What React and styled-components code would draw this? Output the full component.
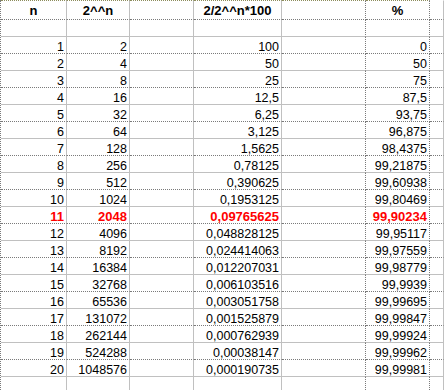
import React from 'react'
import styled, { createGlobalStyle } from 'styled-components'

const GlobalStyle = createGlobalStyle`
  html, body {
    margin: 0;
    padding: 0;
    background: #ffffff;
  }
  body {
    font-family: "Liberation Sans", Arial, sans-serif;
    overflow: hidden;
  }
`

const data = [
  [1, '2', '100', '0'],
  [2, '4', '50', '50'],
  [3, '8', '25', '75'],
  [4, '16', '12,5', '87,5'],
  [5, '32', '6,25', '93,75'],
  [6, '64', '3,125', '96,875'],
  [7, '128', '1,5625', '98,4375'],
  [8, '256', '0,78125', '99,21875'],
  [9, '512', '0,390625', '99,60938'],
  [10, '1024', '0,1953125', '99,80469'],
  [11, '2048', '0,09765625', '99,90234'],
  [12, '4096', '0,048828125', '99,95117'],
  [13, '8192', '0,024414063', '99,97559'],
  [14, '16384', '0,012207031', '99,98779'],
  [15, '32768', '0,006103516', '99,9939'],
  [16, '65536', '0,003051758', '99,99695'],
  [17, '131072', '0,001525879', '99,99847'],
  [18, '262144', '0,000762939', '99,99924'],
  [19, '524288', '0,00038147', '99,99962'],
  [20, '1048576', '0,000190735', '99,99981'],
]

const HIGHLIGHT = 11

const Sheet = styled.div`
  width: 444px;
  height: 390px;
  overflow: hidden;
  border-left: 1px dotted #7a7a7a;
  box-sizing: border-box;
`

const Row = styled.div`
  display: grid;
  grid-template-columns: 66px 63px 64px 88px 84px 64px 1fr;
  height: ${p => (p.$header ? 20 : 17)}px;
`

const Cell = styled.div`
  box-sizing: border-box;
  height: 100%;
  overflow: hidden;
  white-space: nowrap;
  padding: 3px 2px 0;
  line-height: 14px;
  font-size: ${p => (p.$bold ? '13px' : '12.5px')};
  font-weight: ${p => (p.$bold ? 700 : 400)};
  color: ${p => (p.$red ? '#ff0000' : '#000000')};
  text-align: ${p => (p.$center ? 'center' : 'right')};
  border-top: ${p => (p.$top ? '1px dotted #8c8c5c' : p.$header ? '1px solid transparent' : '0')};
  border-right: ${p => (p.$marquee ? '1px dotted #7a7a7a' : '1px solid #c0c0c0')};
  border-bottom: ${p => (p.$dotted ? '1px dotted #7a7a7a' : '1px solid #c0c0c0')};
`

const marqueeCol = i => i === 4 || i === 5

const SheetRow = ({ cells, header, dotted, bold, red }) => (
  <Row $header={header}>
    {cells.map((c, i) => (
      <Cell
        key={i}
        $header={header}
        $top={header && i < 6}
        $center={header}
        $marquee={marqueeCol(i)}
        $dotted={dotted}
        $bold={bold}
        $red={red}
      >
        {c}
      </Cell>
    ))}
  </Row>
)

export default function App() {
  return (
    <>
      <GlobalStyle />
      <Sheet>
        <SheetRow header bold dotted cells={['n', '2^^n', '', '2/2^^n*100', '', '%', '']} />
        <SheetRow cells={['', '', '', '', '', '', '']} />
        {data.map((r, idx) => (
          <SheetRow
            key={r[0]}
            dotted={idx % 2 === 0}
            bold={r[0] === HIGHLIGHT}
            red={r[0] === HIGHLIGHT}
            cells={[String(r[0]), r[1], '', r[2], '', r[3], '']}
          />
        ))}
        <SheetRow dotted cells={['', '', '', '', '', '', '']} />
        <SheetRow cells={['', '', '', '', '', '', '']} />
      </Sheet>
    </>
  )
}
